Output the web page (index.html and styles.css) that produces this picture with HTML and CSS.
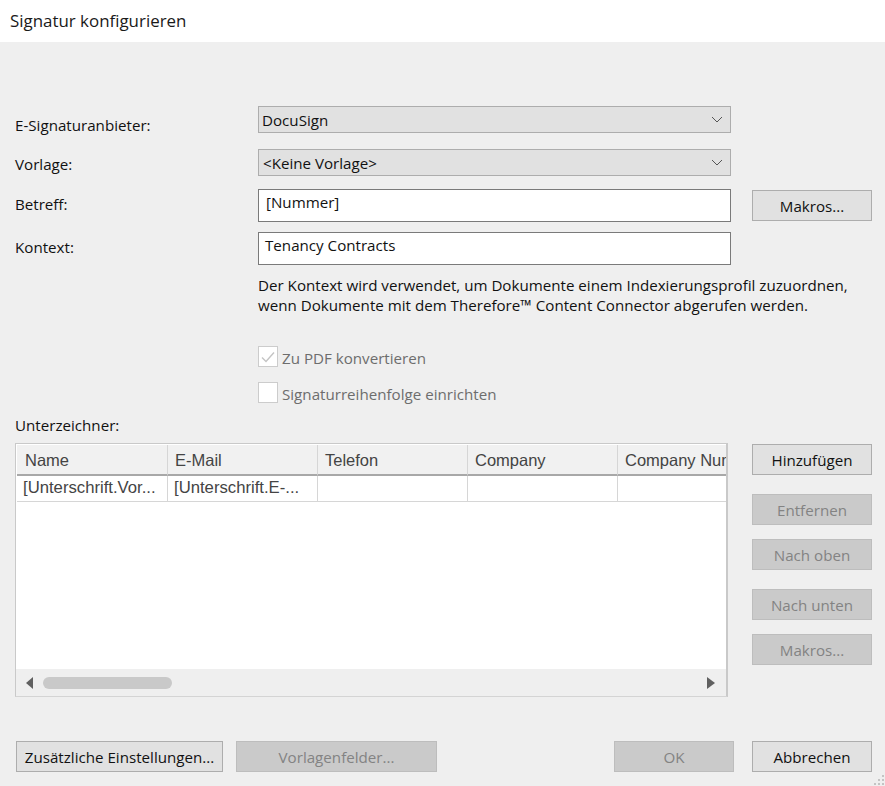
FILE: index.html
```html
<!DOCTYPE html>
<html lang="de">
<head>
<meta charset="utf-8">
<title>Signatur konfigurieren</title>
<link rel="stylesheet" href="styles.css">
</head>
<body>
<div class="dialog">
  <header class="titlebar">Signatur konfigurieren</header>
  <main class="content">
    <div class="row row-provider">
      <label class="label label-provider">E-Signaturanbieter:</label>
      <div class="select"><span>DocuSign</span><svg class="chev" width="12" height="7" viewBox="0 0 12 7"><path d="M1 1l5 5 5-5" fill="none" stroke="#555" stroke-width="1"/></svg></div>
    </div>
    <div class="row row-template">
      <label class="label label-template">Vorlage:</label>
      <div class="select select-alt"><span>&lt;Keine Vorlage&gt;</span><svg class="chev" width="12" height="7" viewBox="0 0 12 7"><path d="M1 1l5 5 5-5" fill="none" stroke="#555" stroke-width="1"/></svg></div>
    </div>
    <div class="row row-subject">
      <label class="label label-subject">Betreff:</label>
      <div class="input input-subject">[Nummer]</div>
      <button class="btn side-btn" type="button">Makros...</button>
    </div>
    <div class="row row-context">
      <label class="label label-context">Kontext:</label>
      <div class="input input-context">Tenancy Contracts</div>
    </div>
    <p class="help">Der Kontext wird verwendet, um Dokumente einem Indexierungsprofil zuzuordnen,<br>wenn Dokumente mit dem Therefore™ Content Connector abgerufen werden.</p>
    <div class="check check-pdf">
      <span class="box"><svg width="18" height="18" viewBox="0 0 18 18"><path d="M3 9.5l4 4 8-9" fill="none" stroke="#c4c4c4" stroke-width="1.4"/></svg></span>
      <span class="check-text">Zu PDF konvertieren</span>
    </div>
    <div class="check check-order">
      <span class="box"></span>
      <span class="check-text">Signaturreihenfolge einrichten</span>
    </div>
    <div class="signers-label">Unterzeichner:</div>
    <div class="signers">
      <div class="grid">
        <div class="grid-view">
          <table>
            <thead>
              <tr><th>Name</th><th>E-Mail</th><th>Telefon</th><th>Company</th><th>Company Number</th></tr>
            </thead>
            <tbody>
              <tr><td>[Unterschrift.Vor...</td><td>[Unterschrift.E-...</td><td></td><td></td><td></td></tr>
            </tbody>
          </table>
        </div>
        <div class="scrollbar">
          <svg class="arrow" width="8" height="12" viewBox="0 0 8 12"><path d="M7 0v12L0 6z" fill="#606060"/></svg>
          <div class="track"><div class="thumb"></div></div>
          <svg class="arrow" width="8" height="12" viewBox="0 0 8 12"><path d="M0 0v12l8-6z" fill="#606060"/></svg>
        </div>
      </div>
      <div class="actions">
        <button class="btn btn-add" type="button">Hinzufügen</button>
        <button class="btn off btn-remove" type="button">Entfernen</button>
        <button class="btn off btn-up" type="button">Nach oben</button>
        <button class="btn off btn-down" type="button">Nach unten</button>
        <button class="btn off btn-macros" type="button">Makros...</button>
      </div>
    </div>
    <footer class="footer">
      <button class="btn btn-extra" type="button">Zusätzliche Einstellungen...</button>
      <button class="btn off btn-fields" type="button">Vorlagenfelder...</button>
      <button class="btn off btn-ok" type="button">OK</button>
      <button class="btn btn-cancel" type="button">Abbrechen</button>
    </footer>
  </main>
  <svg class="grip" width="12" height="12" viewBox="0 0 12 12"><path d="M9 1h2v2H9zM5 5h2v2H5zM9 5h2v2H9zM1 9h2v2H1zM5 9h2v2H5zM9 9h2v2H9z" fill="#c4c4c4"/></svg>
</div>
</body>
</html>
```
FILE: styles.css
```css
* { box-sizing: border-box; }
html, body { margin: 0; padding: 0; }
body {
  width: 885px;
  height: 786px;
  overflow: hidden;
  background: #efefef;
  color: #111;
  font-family: "Open Sans", "Noto Sans", sans-serif;
  font-size: 15.15px;
}
.dialog { position: relative; width: 885px; height: 786px; background: #efefef; }
.titlebar {
  height: 42px;
  padding: 9px 0 0 10px;
  background: #fff;
  font-size: 16.9px;
  line-height: 24px;
  color: #1a1a1a;
}
.content { padding: 64px 13px 0 15px; }
.row { display: flex; align-items: flex-start; }
.label { width: 243px; flex: none; line-height: 20px; }
.label-provider { padding-top: 9px; }
.label-template { padding-top: 5px; }
.label-subject { padding-top: 5px; }
.label-context { padding-top: 5px; }
.row-template { margin-top: 14px; }
.row-subject { margin-top: 13px; }
.row-context { margin-top: 10px; }
.select {
  width: 473px;
  height: 27px;
  display: flex;
  align-items: center;
  justify-content: space-between;
  padding: 0 7px 0 3px;
  background: #e1e1e1;
  border: 1px solid #adadad;
}
.select-alt { padding-left: 4px; }
.chev { flex: none; }
.input {
  width: 473px;
  height: 33px;
  padding: 2px 0 0 7px;
  background: #fff;
  border: 1px solid #7a7a7a;
  line-height: 20px;
}
.input-context { padding-left: 6px; }
.btn {
  display: block;
  height: 31px;
  padding: 0;
  font: inherit;
  color: #111;
  background: #e1e1e1;
  border: 1px solid #adadad;
  border-radius: 0;
}
.btn.off { color: #838383; background: #cacaca; border-color: #bdbdbd; }
.side-btn { width: 120px; margin: 1px 0 0 21px; }
.help { margin: 10px 0 0 243px; line-height: 20px; white-space: nowrap; }
.check { display: flex; align-items: center; margin-left: 243px; color: #6d6d6d; line-height: 20px; }
.check-text { position: relative; top: 1px; }
.check-pdf { margin-top: 31px; }
.check-order { margin-top: 15px; }
.box {
  flex: none;
  width: 20px;
  height: 21px;
  margin-right: 4px;
  display: flex;
  align-items: center;
  justify-content: center;
  background: #fff;
  border: 1px solid #ccc;
}
.signers-label { margin-top: 12px; line-height: 20px; }
.signers { display: flex; align-items: flex-start; margin-top: 8px; }
.grid {
  width: 713px;
  height: 254px;
  flex: none;
  display: flex;
  flex-direction: column;
  background: #fff;
  border: 1px solid #c9c9c9;
  border-right-width: 2px;
  border-bottom-color: #d4d4d4;
}
.grid-view { flex: 1; overflow: hidden; padding: 1px 0 0 1px; }
table {
  width: 751px;
  table-layout: fixed;
  border-collapse: separate;
  border-spacing: 0;
  font-family: "Liberation Sans", Arial, sans-serif;
  font-size: 16.5px;
}
th, td { width: 150px; overflow: hidden; white-space: nowrap; font-weight: 400; text-align: left; }
th:first-child, td:first-child { width: 151px; }
th {
  height: 31px;
  padding: 1px 0 0 7px;
  color: #444;
  background: #f1f1f1;
  border-right: 1px solid #d6d6d6;
  border-bottom: 2px solid #a8a8a8;
}
th:first-child { padding-left: 8px; }
td {
  height: 26px;
  padding: 0 0 1px 6px;
  color: #444;
  font-size: 16.7px;
  background: #fff;
  border-right: 1px solid #d6d6d6;
  border-bottom: 1px solid #d6d6d6;
}
.scrollbar {
  flex: none;
  height: 27px;
  display: flex;
  align-items: center;
  padding: 0 11px 0 10px;
  background: #efefef;
}
.track { flex: 1; padding-left: 9px; }
.thumb { width: 129px; height: 12px; background: #c9c9c9; border-radius: 6px; }
.actions { width: 120px; margin-left: 24px; flex: none; margin-top: 1px; }
.actions .btn { width: 120px; }
.btn-remove { margin-top: 19px; }
.btn-up { margin-top: 14px; }
.btn-down { margin-top: 19px; }
.btn-macros { margin-top: 14px; }
.footer { display: flex; margin-top: 44px; padding-left: 1px; }
.btn-extra { width: 207px; }
.btn-fields { width: 201px; margin-left: 13px; }
.btn-ok { width: 120px; margin-left: auto; }
.btn-cancel { width: 120px; margin-left: 18px; }
.grip { position: absolute; right: 0; bottom: 0; }
```
